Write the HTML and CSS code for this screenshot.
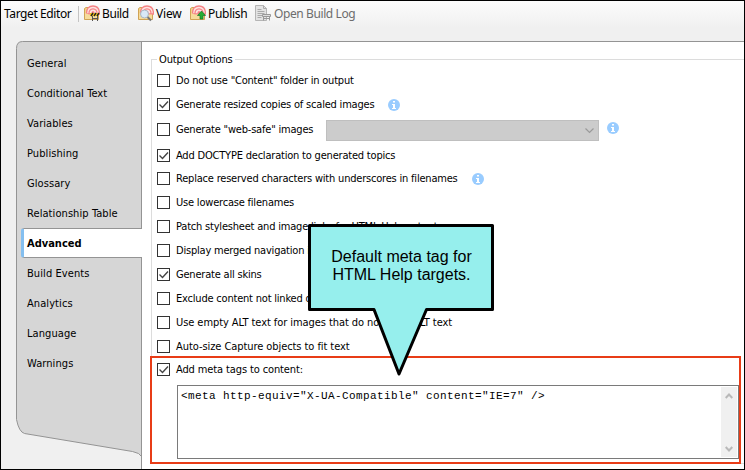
FILE: index.html
```
<!DOCTYPE html>
<html lang="en">
<head>
<meta charset="utf-8">
<title>Target Editor</title>
<link rel="stylesheet" href="styles.css">
</head>
<body>
<svg class="defs" width="0" height="0">
  <defs>
    <g id="folder">
      <path d="M.5 14.500V3.500L2 2.500H5.500L6.500 4H14.500V14.500z" fill="#f3d488" stroke="#d0a355"/>
      <path d="M2.500 9C2.200 3.500 5 1 9 1S15.500 3.500 15.500 9z" fill="#fde3e1" stroke="#f58285" stroke-width="1.300"/>
      <path d="M5 9C4.800 5.500 6.500 3.800 9 3.800S13.200 5.500 13 9" fill="none" stroke="#f58285" stroke-width="1.200"/>
      <circle cx="9" cy="7.500" r="1.500" fill="#f58285"/>
      <path d="M1 14V8l4 1.500h9V14z" fill="#f6dc9c"/>
    </g>
    <g id="info">
      <circle cx="6" cy="6" r="6" fill="#99ccff"/>
      <path d="M5 2h2v1.500H5zM4 5h3v4h1v1H4V9h1V6H4z" fill="#fff"/>
    </g>
    <path id="tick" d="M2.500 6.500l3 3 5.500-6" fill="none" stroke="#444" stroke-width="1.400"/>
  </defs>
</svg>
<div class="window">
  <header class="toolbar">
    <span class="title">Target Editor</span>
    <span class="sep"></span>
    <span class="tool build"><svg width="16" height="17"><use href="#folder"/><path d="M6 8h9v3H6z" fill="#f6c51c"/><path d="M7 11l2-3M10 11l2-3M13 11l2-3" stroke="#222" stroke-width="1.400"/><path d="M8.500 11v5M13.500 11v5M8 13.500h6" stroke="#555"/></svg><span>Build</span></span>
    <span class="tool view"><svg width="16" height="17"><use href="#folder"/><path d="M9 11.500l4 4" stroke="#777" stroke-width="2"/><circle cx="6.500" cy="9" r="4" fill="#d9e9f7" stroke="#a9b6c3"/></svg><span>View</span></span>
    <span class="tool publish"><svg width="16" height="17"><use href="#folder"/><path d="M11.500 6l4 4.500h-2.500V14h-3v-3.500H7.500z" fill="#27ad35" stroke="#12772a" stroke-width=".7"/></svg><span>Publish</span></span>
    <span class="tool log"><svg width="17" height="17"><path d="M.5.5h8l3 3v12H.5z" fill="#e3e3e3" stroke="#b5b5b5"/><path d="M8.500.5v3h3M2.500 4.500h4M2.500 6.500h7M2.500 8.500h7M2.500 10.500h5M2.500 12.500h4" fill="none" stroke="#aaa"/><path d="M7.500 9.500h8v2h-8zM8.500 11v4.500M14.500 11v4.500M8 13.500h7" fill="#ddd" stroke="#999"/></svg><span>Open Build Log</span></span>
  </header>
  <div class="body">
    <nav class="sidebar">
      <svg class="shape" width="126" height="428"><path d="M125.500.5H6.500Q.5.5.5 7.500V378.500Q3 391 8.500 392.500L116.500 410.500Q124 412 125.500 415.500z" fill="#d6d6d6" stroke="#949494"/><path d="M125.500 0V428" stroke="#949494"/></svg>
      <ul>
        <li>General</li>
        <li>Conditional Text</li>
        <li>Variables</li>
        <li>Publishing</li>
        <li>Glossary</li>
        <li>Relationship Table</li>
        <li class="active">Advanced</li>
        <li>Build Events</li>
        <li>Analytics</li>
        <li>Language</li>
        <li>Warnings</li>
      </ul>
    </nav>
    <main class="content">
      <section class="group">
        <h2>Output Options</h2>
        <div class="row"><i class="box"></i><span>Do not use "Content" folder in output</span></div>
        <div class="row r2"><i class="box"><svg><use href="#tick"/></svg></i><span>Generate resized copies of scaled images</span><svg class="info i1"><use href="#info"/></svg></div>
        <div class="row r3"><i class="box"></i><span>Generate "web-safe" images</span><div class="select"><svg width="9" height="6"><path d="M.5.500l4 4 4-4" fill="none" stroke="#9a9a9a" stroke-width="1.200"/></svg></div><svg class="info i2"><use href="#info"/></svg></div>
        <div class="row r4"><i class="box"><svg><use href="#tick"/></svg></i><span>Add DOCTYPE declaration to generated topics</span></div>
        <div class="row"><i class="box"></i><span>Replace reserved characters with underscores in filenames</span><svg class="info i3"><use href="#info"/></svg></div>
        <div class="row"><i class="box"></i><span>Use lowercase filenames</span></div>
        <div class="row"><i class="box"></i><span>Patch stylesheet and image links for HTML Help output</span></div>
        <div class="row"><i class="box"></i><span>Display merged navigation in</span></div>
        <div class="row"><i class="box"><svg><use href="#tick"/></svg></i><span>Generate all skins</span></div>
        <div class="row"><i class="box"></i><span>Exclude content not linked d</span></div>
        <div class="row wide"><i class="box"></i><span>Use empty ALT text for images that do not have ALT text</span></div>
        <div class="row wide r12"><i class="box"></i><span>Auto-size Capture objects to fit text</span></div>
        <div class="meta">
          <div class="row"><i class="box"><svg><use href="#tick"/></svg></i><span>Add meta tags to content:</span></div>
          <div class="editor">
            <code>&lt;meta http-equiv="X-UA-Compatible" content="IE=7" /&gt;</code>
            <div class="scroll"><svg width="8" height="6"><path d="M.7 5L4 1.500 7.300 5" fill="none" stroke="#b9b9b9" stroke-width="2"/></svg><svg width="8" height="6"><path d="M.7 1L4 4.500 7.300 1" fill="none" stroke="#b9b9b9" stroke-width="2"/></svg></div>
          </div>
        </div>
      </section>
    </main>
  </div>
  <div class="callout">
    <svg width="192" height="158"><path d="M3.500 2.500H186.500V86.500H120.500L93 151 68 86.500H3.500z" fill="#96efed" stroke="#000" stroke-width="3" stroke-linejoin="round"/></svg>
    <p>Default meta tag for<br>HTML Help targets.</p>
  </div>
</div>
</body>
</html>
```
FILE: styles.css
```
* { box-sizing: border-box; margin: 0; padding: 0; }
body { width: 745px; height: 470px; overflow: hidden; }
.defs { position: absolute; }
svg { display: block; flex: none; }
.window {
  position: relative;
  width: 745px;
  height: 470px;
  border: 1px solid #000;
  background: #f0f0f0;
  font-family: "DejaVu Sans Condensed", "Noto Sans", sans-serif;
  font-size: 11px;
  color: #000;
}
.toolbar {
  display: flex;
  height: 40px;
  padding: 4px 0 0 3px;
  background: linear-gradient(#fcfcfc, #f0f0f0 27px);
  font: 12px/17px "Noto Sans", sans-serif;
  letter-spacing: -.4px;
  white-space: nowrap;
}
.title { width: 74px; }
.sep { width: 1px; height: 16px; margin-top: 1px; background: #c4c4c4; }
.tool { display: flex; gap: 2px; }
.build { width: 54px; margin-left: 5px; }
.view { width: 52px; letter-spacing: -.2px; }
.publish { width: 65px; letter-spacing: -.3px; }
.log { gap: 2px; color: #6d6d6d; }
.body { display: flex; height: 428px; border-top: 1px solid #949494; margin-left: 22px; }
.sidebar { position: relative; width: 119px; margin-top: -1px; }
.shape { position: absolute; left: -7px; top: 0; }
.sidebar ul { position: relative; list-style: none; padding-top: 7px; margin-left: -2px; letter-spacing: .08px; }
.sidebar li { height: 30px; line-height: 32px; padding-left: 6px; white-space: nowrap; }
.sidebar .active {
  height: 30px;
  line-height: 30px;
  padding-left: 3px;
  background: #fff;
  border: solid #949494;
  border-width: 1px 0;
  border-left: 3px solid #84bff0;
  border-radius: 3px 0 0 3px;
  font-weight: bold;
  letter-spacing: 0;
}
.content { flex: 1; background: #fff; padding: 17px 0 5px 9px; }
.group { height: 405px; border: 1px solid #dcdcdc; border-right: 0; padding-left: 5px; }
h2 { width: 78px; height: 14px; margin: -7px 0 7px 0; padding-left: 2px; background: #fff; font-size: 11px; font-weight: normal; line-height: 14px; letter-spacing: -.15px; white-space: nowrap; }
.row { display: flex; align-items: center; height: 13px; margin-bottom: 11px; letter-spacing: -.2px; white-space: nowrap; }
.row span { margin-left: 6px; line-height: 13px; }
.wide { letter-spacing: -.07px; }
.box { width: 13px; height: 13px; border: 1px solid #333; flex: none; }
.box svg { width: 13px; height: 13px; margin: -1px; }
.r2 { margin-bottom: 12px; }
.r3 { margin-bottom: 13px; }
.r4 { margin-bottom: 10px; }
.r12 { margin-bottom: 3px; }
.info { width: 12px; height: 12px; margin-left: 14px; }
.i2 { margin: -4px 0 0 8px; }
.r3 span { width: 139px; }
.select { display: flex; align-items: center; justify-content: flex-end; width: 273px; height: 21px; margin-left: 11px; padding-right: 4px; background: #ccc; border: 1px solid #bfbfbf; flex: none; margin-top: 2px; }
.meta { width: 591px; height: 108px; margin-left: -7px; border: 2px solid #e83c17; padding: 5px 0 0 5px; }
.meta .row { margin-bottom: 9px; letter-spacing: -.12px; }
.editor { display: flex; justify-content: space-between; width: 562px; height: 74px; margin-left: 20px; padding: 1px; border: 1px solid #7a7a7a; background: #fff; }
code { margin: 3px 0 0 2px; font: 11px/13px "Liberation Mono", monospace; letter-spacing: .4px; white-space: nowrap; }
.scroll { display: flex; flex-direction: column; justify-content: space-between; align-items: center; width: 16px; padding: 6px 0 5px; background: #f0f0f0; }
.callout { position: absolute; left: 305px; top: 222px; width: 190px; }
.callout p { position: absolute; left: 0; top: 25px; width: 191px; text-align: center; font: 16px/18px "Liberation Sans", sans-serif; }
```
